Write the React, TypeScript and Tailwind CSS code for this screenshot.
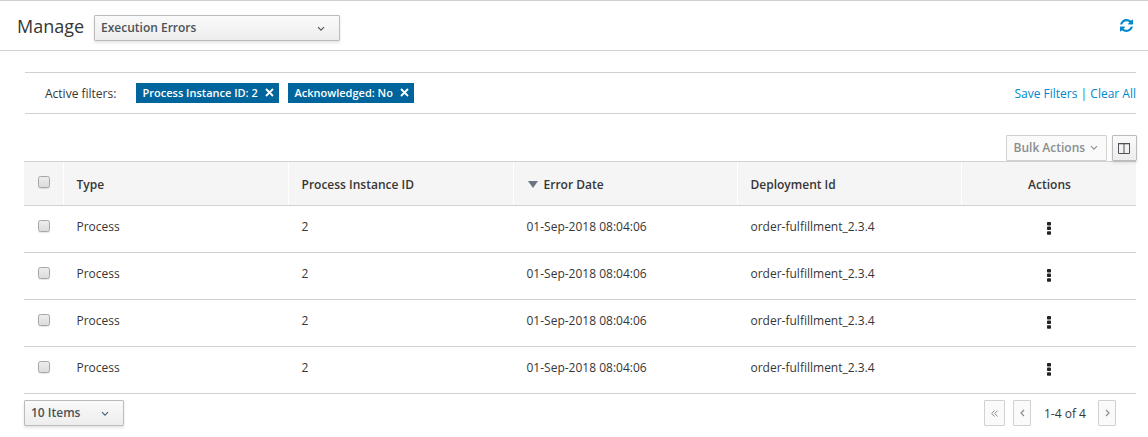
import React from "react";

const rows = [1, 2, 3, 4].map((id) => ({
  id,
  type: "Process",
  instance: "2",
  date: "01-Sep-2018 08:04:06",
  deployment: "order-fulfillment_2.3.4",
}));

const GRID = "grid grid-cols-[39px_225px_225px_224px_224px_175px]";

const BUTTON =
  "flex items-center rounded-[1px] border border-[#bbb] bg-linear-to-b from-[#fafafa] to-[#ededed] font-semibold text-[#4d5258] shadow-[0_2px_3px_rgba(3,3,3,0.1)]";

function Chevron({ className }: { className?: string }) {
  return (
    <svg width="8" height="6" viewBox="0 0 8 6" fill="none" stroke="currentColor" strokeWidth="1.1" className={className}>
      <path d="M1 1.200 4 4.200 7 1.200" />
    </svg>
  );
}

function Refresh() {
  return (
    <svg width="13" height="13" viewBox="0 0 1536 1536" fill="currentColor">
      <path d="M1511 928q0 5-1 7-64 268-268 434.5t-478 166.500q-146 0-282.500-55t-243.500-157l-129 129q-19 19-45 19t-45-19-19-45v-448q0-26 19-45t45-19h448q26 0 45 19t19 45-19 45l-137 137q71 66 161 102t187 36q134 0 250-65t186-179q11-17 53-117 8-23 30-23h192q13 0 22.500 9.500t9.500 22.500zm25-800v448q0 26-19 45t-45 19h-448q-26 0-45-19t-19-45 19-45l138-138q-148-137-349-137-134 0-250 65t-186 179q-11 17-53 117-8 23-30 23h-199q-13 0-22.500-9.500t-9.500-22.500v-7q65-268 270-434.500t480-166.500q146 0 284 55.500t245 156.500l130-129q19-19 45-19t45 19 19 45z" />
    </svg>
  );
}

function Checkbox() {
  return (
    <span
      role="checkbox"
      aria-checked="false"
      className="block size-3 rounded-[2.5px] border border-[#a5a5a5] bg-linear-to-b from-[#ededed] to-[#dcdcdc] shadow-[0_1px_1px_rgba(0,0,0,0.1)]"
    />
  );
}

function FilterTag({ label, className }: { label: string; className: string }) {
  return (
    <span className={`flex h-5 items-center justify-between bg-[#00659c] pr-[5px] pl-[6.5px] text-[11px] font-semibold text-white ${className}`}>
      <span className="whitespace-nowrap">{label}</span>
      <svg width="9" height="9" viewBox="0 0 9 9" stroke="currentColor" strokeWidth="1.800" className="-mt-0.5">
        <path d="M1 1 8 8M8 1 1 8" />
      </svg>
    </span>
  );
}

function Kebab() {
  return (
    <svg width="4" height="13" viewBox="0 0 4 13" fill="#222">
      <rect x="0" y="0" width="4" height="3.500" rx="0.800" />
      <rect x="0" y="4.600" width="4" height="3.500" rx="0.800" />
      <rect x="0" y="9.200" width="4" height="3.500" rx="0.800" />
    </svg>
  );
}

function PageButton({ className, children }: { className: string; children: React.ReactNode }) {
  return (
    <button className={`flex h-[26px] items-center justify-center rounded-[1px] border border-[#d1d1d1] bg-[#fafafa] text-[#8b8d8f] ${className}`}>
      {children}
    </button>
  );
}

export default function App() {
  return (
    <div className="h-[437px] w-[1148px] overflow-hidden bg-white font-['Open_Sans','Noto_Sans',sans-serif] text-xs leading-5 text-[#363636]">
      <header className="flex h-[51px] items-start border-y border-[#d1d1d1] pl-[17px]">
        <h1 className="mt-[13px] w-[77px] text-lg leading-6">Manage</h1>
        <button className={`${BUTTON} mt-[14px] h-[26px] w-[246px] justify-between pr-[14px] pl-1.5`}>
          <span>Execution Errors</span>
          <Chevron className="mt-0.5" />
        </button>
        <span className="mt-[18px] mr-[15px] ml-auto text-[#0088ce]">
          <Refresh />
        </span>
      </header>

      <section className="mt-[21px] mr-3 ml-[25px] flex h-[42px] items-center border-y border-[#d1d1d1] pl-5">
        <span className="w-[91px] pt-0.5">Active filters:</span>
        <FilterTag label="Process Instance ID: 2" className="mr-[9px] w-[143px]" />
        <FilterTag label="Acknowledged: No" className="w-[126px]" />
        <span className="ml-auto pt-0.5 whitespace-nowrap text-[#0088ce]">
          <a>Save Filters</a> <span>|</span> <a>Clear All</a>
        </span>
      </section>

      <div className="mt-[21px] mr-[11px] flex h-[26px] justify-end gap-[5px]">
        <button className="flex w-[101px] items-center justify-between rounded-[1px] border border-[#d1d1d1] bg-[#fafafa] pr-2 pl-[6.5px] font-semibold text-[#8b8d8f]">
          Bulk Actions
          <Chevron />
        </button>
        <button className={`${BUTTON} w-[25px] pl-[5px]`}>
          <svg width="12" height="11" viewBox="0 0 12 11" fill="none" stroke="#4d5258">
            <path d="M.5 1v9.500h11V1M6 1v9.500" />
            <path d="M0 .5h12" strokeWidth="1.600" />
          </svg>
        </button>
      </div>

      <div className="mr-3 ml-6">
        <div className={`${GRID} h-[45px] items-stretch border-y border-[#d1d1d1] bg-[#f5f5f5] font-semibold *:flex *:items-center`}>
          <div className="pl-3.5 pb-[3px]">
            <Checkbox />
          </div>
          <div className="border-l border-white pt-0.5 pl-[12.5px]">Type</div>
          <div className="border-l border-white pt-0.5 pl-[12.5px]">Process Instance ID</div>
          <div className="border-l border-white pt-0.5 pl-[13.5px]">
            <svg width="10" height="7" viewBox="0 0 10 7" fill="#6a7584" className="mr-1.5">
              <path d="M0 0h10L5 7z" />
            </svg>
            Error Date
          </div>
          <div className="border-l border-white pt-0.5 pl-[12.5px]">Deployment Id</div>
          <div className="justify-center border-l border-white pt-0.5 pl-px">Actions</div>
        </div>
        {rows.map((r) => (
          <div key={r.id} className={`${GRID} h-[47px] items-start border-b border-[#d1d1d1]`}>
            <div className="pt-3.5 pl-3.5">
              <Checkbox />
            </div>
            <div className="pt-[11px] pl-[13.5px]">{r.type}</div>
            <div className="pt-[11px] pl-[13.5px]">{r.instance}</div>
            <div className="pt-[11px] pl-[13.5px]">{r.date}</div>
            <div className="pt-[11px] pl-[13.5px]">{r.deployment}</div>
            <div className="flex justify-center pt-4">
              <Kebab />
            </div>
          </div>
        ))}
      </div>

      <footer className="mt-1.5 ml-6 flex h-[26px] items-center">
        <button className={`${BUTTON} h-[26px] w-[100px] justify-between pr-3.5 pl-1.5`}>
          <span>10 Items</span>
          <Chevron className="mt-0.5 text-[#39617e]" />
        </button>
        <div className="mr-8 ml-auto flex items-center">
          <PageButton className="mr-2 w-[21px]">
            <svg width="7" height="7" viewBox="0 0 7 7" fill="none" stroke="currentColor">
              <path d="M3.500.5.7 3.500l2.800 3M6.500.5 3.700 3.500l2.800 3" />
            </svg>
          </PageButton>
          <PageButton className="w-[18px]">
            <svg width="5" height="8" viewBox="0 0 5 8" fill="none" stroke="currentColor" strokeWidth="1.200">
              <path d="M4 1 1 4l3 3" />
            </svg>
          </PageButton>
          <span className="w-[67px] pt-0.5 pl-[13px] whitespace-nowrap">1-4 of 4</span>
          <PageButton className="w-[18px]">
            <svg width="5" height="8" viewBox="0 0 5 8" fill="none" stroke="currentColor" strokeWidth="1.200">
              <path d="M1 1l3 3-3 3" />
            </svg>
          </PageButton>
        </div>
      </footer>
    </div>
  );
}
